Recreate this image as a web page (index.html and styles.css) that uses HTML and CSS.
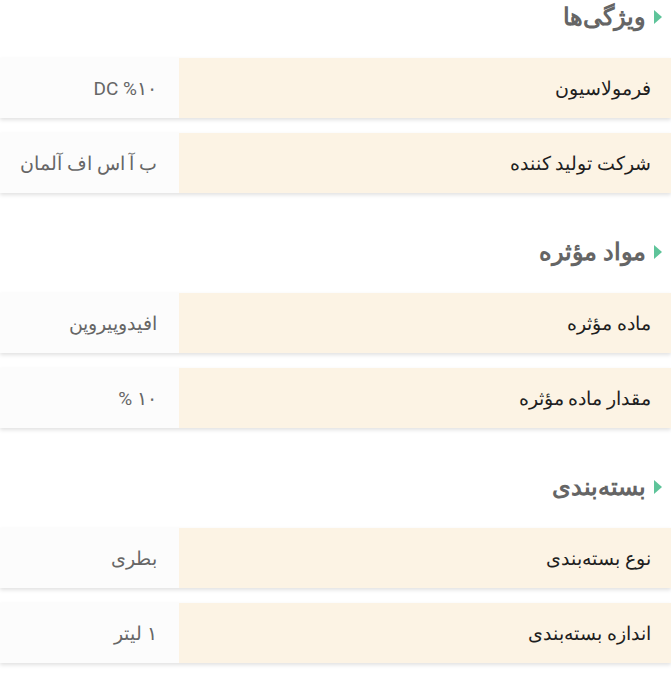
FILE: index.html
```html
<!DOCTYPE html>
<html lang="fa" dir="rtl">
<head>
<meta charset="utf-8">
<link rel="stylesheet" href="styles.css">
</head>
<body>
<section class="spec">
  <h2 class="spec-title">ویژگی‌ها</h2>
  <div class="row"><div class="label">فرمولاسیون</div><div class="value">DC %۱۰</div></div>
  <div class="row"><div class="label">شرکت تولید کننده</div><div class="value">ب آ اس اف آلمان</div></div>
</section>
<section class="spec">
  <h2 class="spec-title">مواد مؤثره</h2>
  <div class="row"><div class="label">ماده مؤثره</div><div class="value">افیدوپیروپن</div></div>
  <div class="row"><div class="label">مقدار ماده مؤثره</div><div class="value">۱۰ %</div></div>
</section>
<section class="spec">
  <h2 class="spec-title">بسته‌بندی</h2>
  <div class="row"><div class="label">نوع بسته‌بندی</div><div class="value">بطری</div></div>
  <div class="row"><div class="label">اندازه بسته‌بندی</div><div class="value">۱ لیتر</div></div>
</section>
</body>
</html>
```

FILE: styles.css
```css
html, body {
  margin: 0;
  padding: 0;
  background: #ffffff;
}
body {
  direction: rtl;
  font-family: "Roboto", "Noto Sans", sans-serif;
  width: 671px;
}
.spec + .spec {
  margin-top: 42px;
}
.spec-title {
  display: flex;
  align-items: center;
  gap: 8px;
  margin: 0 0 24px 0;
  padding-right: 9px;
  height: 34px;
  font-size: 24px;
  font-weight: bold;
  color: #656565;
}
.spec-title::before {
  content: "";
  width: 0;
  height: 0;
  border-top: 7px solid transparent;
  border-bottom: 7px solid transparent;
  border-left: 8px solid #5ec49a;
}
.row {
  display: flex;
  height: 60px;
  margin-bottom: 15px;
  box-shadow: 0 2px 4px rgba(0, 0, 0, 0.12);
}
.label {
  flex: 1;
  display: flex;
  align-items: center;
  padding-right: 20px;
  background: #fcf3e4;
  color: #1e1e1e;
  font-size: 19px;
}
.value {
  width: 157px;
  display: flex;
  align-items: center;
  padding-right: 22px;
  background: #fcfcfc;
  color: #666666;
  font-size: 19px;
}
```
